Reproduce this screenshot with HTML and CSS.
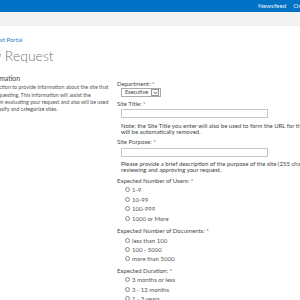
FILE: index.html
```
<!DOCTYPE html>
<html>
<head>
<meta charset="utf-8">
<link rel="stylesheet" href="styles.css">
</head>
<body>
<div class="suitebar">
  <a class="suite-link">Newsfeed</a>
  <a class="suite-link">OneDrive</a>
  <a class="suite-link">Sites</a>
</div>
<div class="ribbon"></div>
<div class="page">
  <div class="header">
    <a class="crumb">Site Request Portal</a>
    <h1 class="title">New Request</h1>
  </div>
  <div class="form">
    <div class="section-info">
      <h2 class="section-title">Site Information</h2>
      <p class="section-desc">Use this section to provide information about the site that<br>you are requesting. This information will assist the<br>approvers in evaluating your request and also will be used<br>to help classify and categorize sites.</p>
    </div>
    <div class="fields">
      <div class="label">Department: *</div>
      <div class="select"><span class="select-val">Executive</span><span class="select-arrow"><svg width="5" height="4" viewBox="0 0 5 4"><path d="M0.6 0.8 L2.5 3 L4.4 0.8" fill="none" stroke="#555" stroke-width="0.8"/></svg></span></div>
      <div class="label gap-s">Site Title: *</div>
      <div class="input"></div>
      <p class="note">Note: the Site Title you enter will also be used to form the URL for the new site. Special characters<br>will be automatically removed.</p>
      <div class="label">Site Purpose: *</div>
      <div class="input"></div>
      <p class="note">Please provide a brief description of the purpose of the site (255 characters max). This helps in<br>reviewing and approving your request.</p>
      <div class="label">Expected Number of Users: *</div>
      <ul class="radios">
        <li><span class="radio"></span>1-9</li>
        <li><span class="radio"></span>10-99</li>
        <li><span class="radio"></span>100-999</li>
        <li><span class="radio"></span>1000 or More</li>
      </ul>
      <div class="label">Expected Number of Documents: *</div>
      <ul class="radios tight">
        <li><span class="radio"></span>less than 100</li>
        <li><span class="radio"></span>100 - 5000</li>
        <li><span class="radio"></span>more than 5000</li>
      </ul>
      <div class="label">Expected Duration: *</div>
      <ul class="radios">
        <li><span class="radio"></span>3 months or less</li>
        <li><span class="radio"></span>3 - 12 months</li>
        <li><span class="radio"></span>1 - 3 years</li>
      </ul>
    </div>
  </div>
</div>
</body>
</html>
```
FILE: styles.css
```
html, body {
  margin: 0;
  padding: 0;
  background: #fff;
  overflow: hidden;
}
body {
  font-family: Lato, "Open Sans", sans-serif;
  color: #444;
  width: 300px;
  height: 300px;
}
.suitebar {
  height: 12px;
  background: #0072c6;
  display: flex;
  align-items: center;
  padding-left: 258px;
  gap: 7px;
  white-space: nowrap;
  overflow: hidden;
}
.suite-link {
  color: #e6f0fa;
  font-size: 6.4px;
  line-height: 12px;
}
.ribbon {
  height: 13px;
  background: #f3f3f3;
  border-bottom: 1px solid #ececec;
}
.page {
  margin-left: -25px;
}
.header {
  padding-top: 10px;
}
.crumb {
  display: block;
  color: #2a7cc7;
  font-size: 6.2px;
  line-height: 8px;
  text-indent: -4px;
}
.title {
  margin: 3px 0 0 -2px;
  font-family: "Lato Light", Lato, sans-serif;
  font-size: 14px;
  font-weight: 300;
  color: #777;
  line-height: 18px;
}
.form {
  display: grid;
  grid-template-columns: 136px 1fr;
  margin-top: 9px;
}
.section-title {
  margin: 0;
  font-size: 6.8px;
  font-weight: 400;
  color: #444;
  line-height: 8px;
  text-indent: -3px;
}
.section-desc {
  margin: 2.25px 0 0 0;
  font-size: 5.3px;
  line-height: 7.4px;
  color: #555;
  white-space: nowrap;
  text-indent: -1px;
}
.fields {
  padding-top: 6px;
  padding-left: 6px;
  white-space: nowrap;
}
.label {
  font-size: 6px;
  line-height: 8px;
  color: #4a4a4a;
}
.gap-s {
  margin-top: 2.5px;
}
.select {
  display: flex;
  width: fit-content;
  align-items: center;
  margin: 0 0 0 4px;
  height: 7px;
  border: 1px solid #aaa;
  color: #444;
}
.select-val {
  padding: 0 2px 0 3px;
  width: 24px;
  font-size: 5.4px;
  line-height: 7px;
  overflow: hidden;
}
.select-arrow {
  display: flex;
  align-items: center;
  justify-content: center;
  width: 6px;
  height: 5px;
  border: 1px solid #999;
  margin-right: 1px;
}
.input {
  margin: 1.5px 0 0 4px;
  width: 145px;
  height: 7px;
  border: 1px solid #c6c6c6;
}
.note {
  margin: 4.5px 0 3px 4px;
  font-size: 6px;
  line-height: 6.3px;
  color: #444;
}
.radios {
  list-style: none;
  margin: 0.5px 0 4px 8px;
  padding: 0;
}
.radios li {
  display: flex;
  align-items: center;
  height: 9.5px;
  font-size: 6px;
  color: #555;
}
.radios.tight li {
  height: 9px;
}
.radio {
  box-sizing: border-box;
  width: 5px;
  height: 5px;
  border: 0.8px solid #888;
  border-radius: 50%;
  margin-right: 2px;
}
```
